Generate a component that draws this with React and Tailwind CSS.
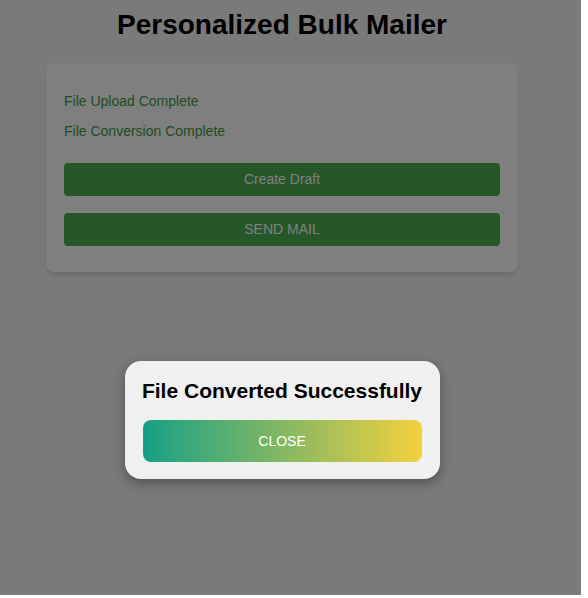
export default function App() {
  return (
    <div className="min-h-screen bg-white font-['Liberation_Sans',Arial,sans-serif]">
      <div className="relative w-[581px] h-[595px] bg-[#f5f5f5]">
        <div className="w-[564px] flex flex-col items-center">
          <h1 className="pt-[9px] text-[28px] leading-[32px] font-bold text-black">
            Personalized Bulk Mailer
          </h1>
          <div className="mt-[22px] w-[472px] bg-white rounded-lg shadow-md pt-[30px] pb-[26px] px-[18px]">
            <p className="text-[14px] leading-4 text-[#3f9a43]">File Upload Complete</p>
            <p className="mt-[14px] text-[14px] leading-4 text-[#3f9a43]">File Conversion Complete</p>
            <button className="mt-[24px] w-full h-[33px] rounded bg-[#4caf50] text-white text-[14px]">
              Create Draft
            </button>
            <button className="mt-[17px] w-full h-[33px] rounded bg-[#4caf50] text-white text-[14px]">
              SEND MAIL
            </button>
          </div>
        </div>

        <div className="absolute inset-0 bg-black/50">
          <div className="w-[564px] flex justify-center pt-[361px]">
            <div className="w-[315px] bg-[#f0f0f0] rounded-2xl shadow-[0_4px_12px_rgba(0,0,0,0.35)] pt-[18px] pb-[17px] px-[18px] flex flex-col items-center">
              <h2 className="whitespace-nowrap text-[21px] leading-6 font-bold text-black">
                File Converted Successfully
              </h2>
              <button className="mt-[17px] w-full h-[42px] rounded-lg bg-linear-to-r/srgb from-[#16a085] to-[#f4d03f] text-white text-[14px]">
                CLOSE
              </button>
            </div>
          </div>
        </div>
      </div>
    </div>
  );
}
